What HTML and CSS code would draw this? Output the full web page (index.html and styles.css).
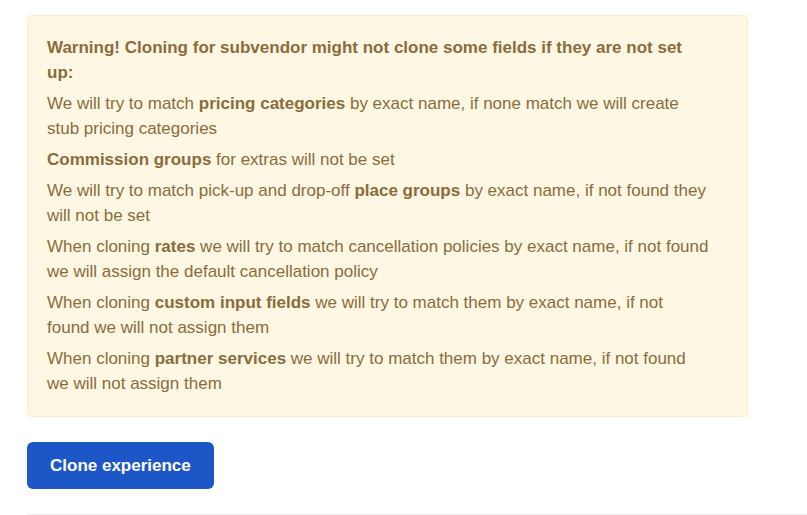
FILE: index.html
```html
<!DOCTYPE html>
<html lang="en">
<head>
    <meta charset="UTF-8">
    <meta name="viewport" content="width=device-width, initial-scale=1.0">
    <title>Clone experience</title>
    <link rel="stylesheet" href="styles.css">
</head>
<body>
    <main class="content">
        <form class="clone-form">
            <div class="alert">
                <p><strong>Warning! Cloning for subvendor might not clone some fields if they are not set up:</strong></p>
                <p>We will try to match <strong>pricing categories</strong> by exact name, if none match we will create stub pricing categories</p>
                <p><strong>Commission groups</strong> for extras will not be set</p>
                <p>We will try to match pick-up and drop-off <strong>place groups</strong> by exact name, if not found they will not be set</p>
                <p>When cloning <strong>rates</strong> we will try to match cancellation policies by exact name, if not found we will assign the default cancellation policy</p>
                <p>When cloning <strong>custom input fields</strong> we will try to match them by exact name, if not found we will not assign them</p>
                <p>When cloning <strong>partner services</strong> we will try to match them by exact name, if not found we will not assign them</p>
            </div>
            <button type="submit" class="btn">Clone experience</button>
        </form>
        <hr class="divider">
    </main>
</body>
</html>
```

FILE: styles.css
```css
* {
    box-sizing: border-box;
}

body {
    margin: 0;
    background-color: #fff;
    font-family: "Liberation Sans", Arial, sans-serif;
    font-size: 17px;
    line-height: 25px;
}

.content {
    padding: 15px 0 0 27px;
}

.clone-form {
    margin-right: 59px;
}

.alert {
    padding: 19px 38px 20px 19px;
    margin-bottom: 25px;
    border: 1px solid #faebcc;
    border-radius: 5px;
    background-color: #fdf7e3;
    color: #8a6d3b;
}

.alert p {
    margin: 0;
}

.alert p + p {
    margin-top: 6px;
}

.btn {
    padding: 11px 23px;
    border: none;
    border-radius: 6px;
    background-color: #1d57c7;
    color: #fff;
    font-family: inherit;
    font-size: 17px;
    font-weight: bold;
    line-height: 25px;
    cursor: pointer;
}

.btn:hover {
    background-color: #1747a8;
}

.divider {
    margin: 25px 0 0;
    border: none;
    border-top: 1px solid #eee;
}
```
